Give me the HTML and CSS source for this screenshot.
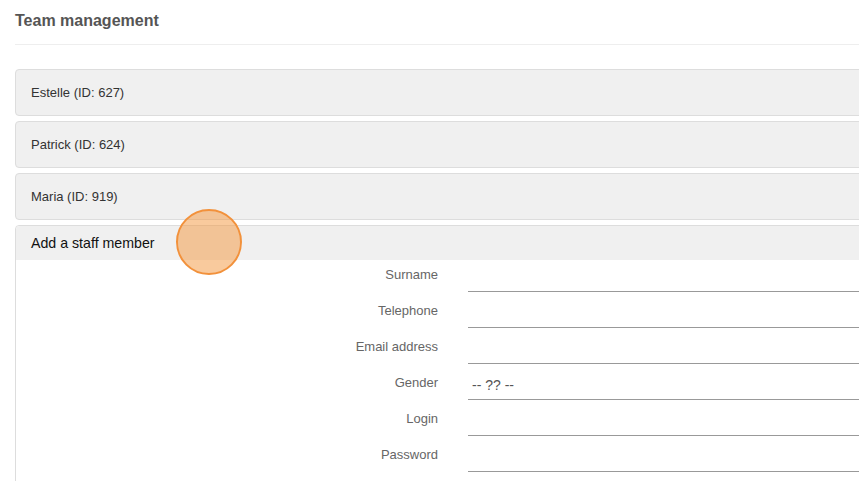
FILE: index.html
```html
<!DOCTYPE html>
<html lang="en">
<head>
  <meta charset="UTF-8">
  <meta name="viewport" content="width=device-width, initial-scale=1.0">
  <title>Team management</title>
  <link rel="stylesheet" href="styles.css">
</head>
<body>
  <div class="container">
    <h1 class="page-title">Team management</h1>
    <div class="panel-group">
      <div class="panel">
        <div class="panel-heading">Estelle (ID: 627)</div>
      </div>
      <div class="panel">
        <div class="panel-heading">Patrick (ID: 624)</div>
      </div>
      <div class="panel">
        <div class="panel-heading">Maria (ID: 919)</div>
      </div>
      <div class="panel open">
        <div class="panel-heading add">Add a staff member</div>
        <span class="click-marker"></span>
        <div class="panel-body">
          <form class="staff-form">
            <label for="surname">Surname</label>
            <input type="text" id="surname">
            <label for="phone">Telephone</label>
            <input type="text" id="phone">
            <label for="email">Email address</label>
            <input type="text" id="email">
            <label for="gender">Gender</label>
            <select id="gender">
              <option>-- ?? --</option>
              <option>Female</option>
              <option>Male</option>
            </select>
            <label for="login">Login</label>
            <input type="text" id="login">
            <label for="password">Password</label>
            <input type="password" id="password">
          </form>
        </div>
      </div>
    </div>
  </div>
</body>
</html>
```

FILE: styles.css
```css
html, body {
  overflow: hidden;
}
body {
  font-family: "Liberation Sans", Arial, sans-serif;
  margin: 0;
  padding: 0;
  background: #fff;
  color: #333;
}
.container {
  width: 1100px;
  padding-left: 15px;
}
.page-title {
  margin: 0;
  padding: 11px 0 13px;
  font-size: 16px;
  line-height: 20px;
  font-weight: bold;
  color: #555;
  border-bottom: 1px solid #eee;
}
.panel-group {
  margin-top: 24px;
}
.panel {
  position: relative;
  margin-bottom: 5px;
  background: #f0f0f0;
  border: 1px solid #ddd;
  border-radius: 4px;
}
.panel-heading {
  padding: 15px 15px;
  font-size: 13px;
  line-height: 15px;
  color: #333;
}
.panel-heading.add {
  padding: 10px 15px;
  font-size: 14.2px;
  line-height: 14px;
  color: #111;
}
.panel.open {
  background: #fff;
}
.panel.open .panel-heading {
  background: #f0f0f0;
  border-radius: 4px 4px 0 0;
}
.panel-body {
  padding: 1px 0 40px;
}
.staff-form {
  display: grid;
  grid-template-columns: 422px 1fr;
  column-gap: 30px;
  row-gap: 5px;
}
.staff-form label {
  text-align: right;
  font-size: 13px;
  line-height: 28px;
  color: #666;
}
.staff-form input, .staff-form select {
  height: 31px;
  border: none;
  border-bottom: 1px solid #999;
  background: transparent;
  font-family: inherit;
  font-size: 13px;
  color: #555;
  padding: 0 4px;
  box-sizing: border-box;
  outline: none;
}
.staff-form select {
  appearance: none;
  -webkit-appearance: none;
  font-size: 14px;
  padding-top: 2px;
}
.click-marker {
  position: absolute;
  left: 160px;
  top: -17px;
  width: 62px;
  height: 62px;
  border: 2px solid #f2913b;
  border-radius: 50%;
  background: rgba(244, 150, 60, 0.5);
}
```
